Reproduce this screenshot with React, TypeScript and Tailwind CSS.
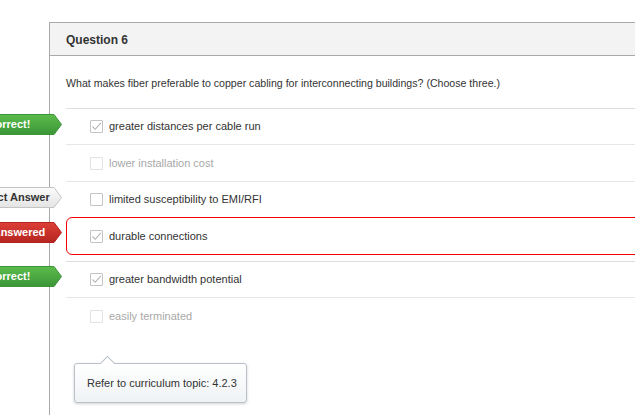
import React from "react";

type TabKind = "correct" | "answer" | "wrong";

const tabStyles: Record<TabKind, { top: string; bottom: string; stroke: string; text: string; label: string }> = {
  correct: { top: "#5cbc4c", bottom: "#3b9537", stroke: "#3b9537", text: "text-white", label: "Correct!" },
  answer: { top: "#fbfbfb", bottom: "#e4e4e4", stroke: "#c4c4c4", text: "text-[#333]", label: "Correct Answer" },
  wrong: { top: "#dc3f37", bottom: "#b52520", stroke: "#b52520", text: "text-white", label: "Not Answered" },
};

function Tab({ kind, className }: { kind: TabKind; className: string }) {
  const s = tabStyles[kind];
  const id = `grad-${kind}-${className.length}`;
  return (
    <div className={`absolute h-[21px] w-[98px] ${className}`}>
      <svg width="98" height="21" viewBox="0 0 98 21" className="absolute inset-0">
        <defs>
          <linearGradient id={id} x1="0" y1="0" x2="0" y2="1">
            <stop offset="0" stopColor={s.top} />
            <stop offset="1" stopColor={s.bottom} />
          </linearGradient>
        </defs>
        <path d="M0.5 0.5 H90 L97.5 10.5 L90 20.5 H0.5 Z" fill={`url(#${id})`} stroke={s.stroke} strokeWidth="1" />
      </svg>
      <span
        className={`absolute left-0 top-0 w-[90px] text-center text-[11px] font-bold leading-[21px] whitespace-nowrap ${s.text}`}
      >
        {s.label}
      </span>
    </div>
  );
}

function Check({ checked, disabled }: { checked?: boolean; disabled?: boolean }) {
  return (
    <span
      className={`flex h-[13px] w-[13px] shrink-0 items-center justify-center rounded-[1px] border bg-white ${
        disabled ? "border-[#e2e2e2]" : "border-[#c4c4c4]"
      }`}
    >
      {checked && (
        <svg width="11" height="11" viewBox="0 0 11 11">
          <path d="M1.5 5.5 L4.2 8.3 L9.8 1.8" fill="none" stroke="#b4b4b4" strokeWidth="1.1" />
        </svg>
      )}
    </span>
  );
}

function Option({ text, checked, disabled }: { text: string; checked?: boolean; disabled?: boolean }) {
  return (
    <div className="flex items-center gap-[6px] pl-[24px]">
      <Check checked={checked} disabled={disabled} />
      <span className={`text-[11px] ${disabled ? "text-[#a8a8a8]" : "text-[#333]"}`}>{text}</span>
    </div>
  );
}

export default function App() {
  return (
    <div className="h-[415px] w-[635px] overflow-hidden bg-white pl-[49px] pt-[22px] font-['Liberation_Sans',Arial,sans-serif] text-[#333]">
      <div className="h-full w-[620px] border-l border-t border-[#a9a9a9]">
        {/* ヘッダー */}
        <div className="flex h-[33px] items-center border-b border-[#a9a9a9] bg-[#f3f3f3] pl-[16px] pt-[2px]">
          <h2 className="text-[12px] font-bold text-[#333]">Question 6</h2>
        </div>

        {/* 本文 */}
        <div className="pl-[16px]">
          <p className="mt-[20px] text-[10.6px] leading-[14px]">
            What makes fiber preferable to copper cabling for interconnecting buildings? (Choose three.)
          </p>
          <div className="mt-[18px] h-px bg-[#dedede]" />

          <div className="relative flex h-[35px] items-center">
            <Tab kind="correct" className="left-[-102px] top-[5px]" />
            <Option text="greater distances per cable run" checked />
          </div>
          <div className="h-px bg-[#e6e6e6]" />

          <div className="flex h-[36px] items-center">
            <Option text="lower installation cost" disabled />
          </div>
          <div className="h-px bg-[#e6e6e6]" />

          <div className="relative flex h-[35px] items-center">
            <Tab kind="answer" className="left-[-102px] top-[5px]" />
            <Option text="limited susceptibility to EMI/RFI" />
          </div>

          <div className="relative flex h-[38px] items-center rounded-[6px] border-[1.5px] border-[#f20000]">
            <Tab kind="wrong" className="left-[-103.5px] top-[3.5px]" />
            <div className="-ml-[1px]">
              <Option text="durable connections" checked />
            </div>
          </div>
          <div className="mt-[6px] h-px bg-[#dedede]" />

          <div className="relative flex h-[35px] items-center">
            <Tab kind="correct" className="left-[-102px] top-[4px]" />
            <Option text="greater bandwidth potential" checked />
          </div>
          <div className="h-px bg-[#e6e6e6]" />

          <div className="flex h-[36px] items-center">
            <Option text="easily terminated" disabled />
          </div>

          {/* ツールチップ */}
          <div className="relative ml-[8px] mt-[29px] w-[173px] rounded-[3px] border border-[#b9c0ca] bg-gradient-to-b from-white to-[#eff2f5] py-[11px] pl-[12px] text-[11px] leading-[16px] shadow-[0_1px_3px_rgba(0,0,0,0.18)]">
            <span className="absolute left-[27px] top-[-6px] h-[11px] w-[11px] rotate-45 border-l border-t border-[#b9c0ca] bg-white" />
            <span className="relative text-[#333]">Refer to curriculum topic: 4.2.3</span>
          </div>
        </div>
      </div>
    </div>
  );
}
